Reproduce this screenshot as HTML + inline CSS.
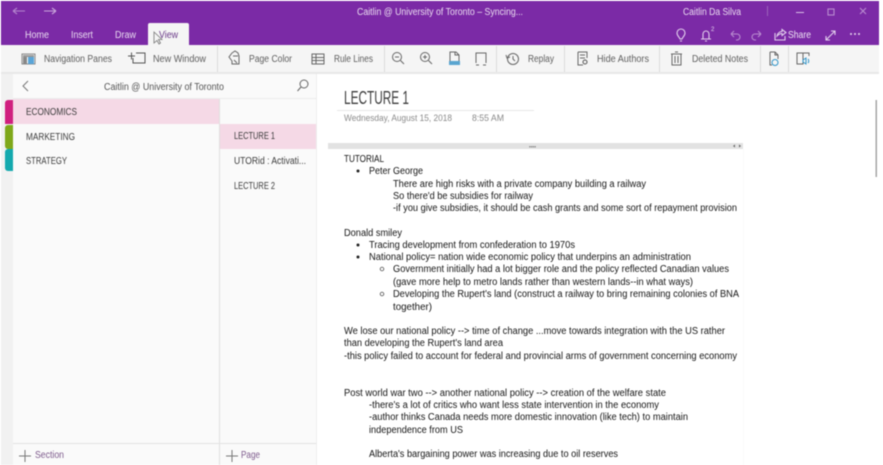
<!DOCTYPE html>
<html><head><meta charset="utf-8">
<style>
html,body{margin:0;padding:0;background:#fff;width:883px;height:465px;overflow:hidden}
svg{display:block;font-family:"Liberation Sans",sans-serif}
.b{filter:blur(.4px)}
.n{fill:#151515;font-size:10px}
.t{fill:#5e5e5e;font-size:10px}
.s{fill:#3c3c3c;font-size:10px}
.w{fill:#eadcf0;font-size:10px}
.i{fill:none;stroke:#666;stroke-width:1}
.iw{fill:none;stroke:#e2cfec;stroke-width:1.1}
</style></head><body>
<svg width="883" height="465" viewBox="0 0 883 465" xmlns="http://www.w3.org/2000/svg">
<g class="b">
<rect x="1" y="1" width="878" height="44" fill="#7b2aa6"/>
<rect x="1" y="45" width="878" height="28" fill="#f5f5f5"/>
<rect x="1" y="72" width="878" height="2" fill="#e8e8e8"/>
<!-- panes -->
<rect x="1" y="74" width="12" height="391" fill="#f1f1f1"/>
<rect x="13" y="74" width="206" height="391" fill="#fafafa"/>
<rect x="219" y="74" width="97" height="391" fill="#fafafa"/>
<rect x="219" y="98" width="1" height="367" fill="#e0e0e0"/>
<rect x="316" y="74" width="1" height="391" fill="#ededed"/>
<rect x="13" y="98" width="303" height="1" fill="#ececec"/>
<rect x="13" y="443" width="303" height="1" fill="#e2e2e2"/>
<rect x="13" y="99" width="206" height="25" fill="#f5d9e6"/>
<rect x="220" y="124" width="96" height="25" fill="#f5d9e6"/>
<path d="M5 103a3 3 0 0 1 3-3h5v24H5z" fill="#d01f7f"/>
<path d="M5 128a3 3 0 0 1 3-3h5v24H8a3 3 0 0 1-3-3z" fill="#7fa81a"/>
<path d="M5 152a3 3 0 0 1 3-3h5v22H8a3 3 0 0 1-3-3z" fill="#14a9ae"/>
<!-- title bar -->
<path d="M13 11h12M13 11l4-3M13 11l4 3" class="iw" opacity=".55"/>
<path d="M44 11h12M56 11l-4-3M56 11l-4 3" class="iw" opacity=".75"/>
<text x="357" y="15" class="w" textLength="166" lengthAdjust="spacingAndGlyphs">Caitlin @ University of Toronto – Syncing...</text>
<text x="683" y="15" class="w" textLength="58" lengthAdjust="spacingAndGlyphs">Caitlin Da Silva</text>
<rect x="767" y="6" width="1" height="10" fill="#9b62bb"/>
<rect x="796" y="12" width="8" height="1" fill="#d9bfe6"/>
<rect x="828" y="9" width="6" height="6" class="iw" opacity=".6"/>
<path d="M860 8l6 6M866 8l-6 6" class="iw" opacity=".6"/>
<!-- tabs -->
<path d="M148 45V25a2 2 0 0 1 2-2h37a2 2 0 0 1 2 2v20z" fill="#f5f5f5"/>
<text x="25" y="38" class="w" textLength="24" lengthAdjust="spacingAndGlyphs">Home</text>
<text x="71" y="38" class="w" textLength="22" lengthAdjust="spacingAndGlyphs">Insert</text>
<text x="115" y="38" class="w" textLength="21" lengthAdjust="spacingAndGlyphs">Draw</text>
<text x="159" y="38" fill="#6a3a88" font-size="10" textLength="19" lengthAdjust="spacingAndGlyphs">View</text>
<path d="M154 32v11l3-2.500 2 3.500 1.500-1-2-3.500h3.500z" fill="#f5f5f5" stroke="#777" stroke-width=".8"/>
<!-- right purple icons -->
<path d="M680 39c-.5-2-3-3-3-6a4 4 0 0 1 8 0c0 3-2.500 4-3 6zM680 41h2" class="iw"/>
<path d="M701 39h10M703 38.500v-4.500a3 3 0 0 1 6 0v4.500M705 41h2" class="iw"/>
<text x="711" y="31" fill="#e6d5ee" font-size="6">2</text>
<path d="M731 34l3-3M731 34l3 3M731 34h6a3 3 0 0 1 0 6h-1" class="iw" opacity=".6"/>
<path d="M761 34l-3-3M761 34l-3 3M761 34h-6a3 3 0 0 0 0 6h1" class="iw" opacity=".6"/>
<path d="M775 33v7h10v-4M777 36c.5-3 3-4.500 5-4.500v-2l4 3-4 3v-2c-2 0-3.500 1-5 2.500z" class="iw"/>
<text x="788" y="38" fill="#f0e6f5" font-size="10.500" textLength="23" lengthAdjust="spacingAndGlyphs">Share</text>
<path d="M826 40l9-9M826 36v4h4M835 35v-4h-4" class="iw"/>
<circle cx="851" cy="34" r="1" fill="#e6d5ee"/><circle cx="855" cy="34" r="1" fill="#e6d5ee"/><circle cx="859" cy="34" r="1" fill="#e6d5ee"/>
<!-- toolbar separators -->
<g fill="#dcdcdc"><rect x="217" y="46" width="1" height="26"/><rect x="384" y="46" width="1" height="26"/><rect x="496" y="46" width="1" height="26"/><rect x="564" y="46" width="1" height="26"/><rect x="659" y="46" width="1" height="26"/><rect x="760" y="46" width="1" height="26"/><rect x="788" y="46" width="1" height="26"/></g>
<!-- toolbar text -->
<text x="44" y="62" class="t" textLength="68" lengthAdjust="spacingAndGlyphs">Navigation Panes</text>
<text x="153" y="62" class="t" textLength="53" lengthAdjust="spacingAndGlyphs">New Window</text>
<text x="249" y="62" class="t" textLength="43" lengthAdjust="spacingAndGlyphs">Page Color</text>
<text x="334" y="62" class="t" textLength="39" lengthAdjust="spacingAndGlyphs">Rule Lines</text>
<text x="528" y="62" class="t" textLength="26" lengthAdjust="spacingAndGlyphs">Replay</text>
<text x="597" y="62" class="t" textLength="52" lengthAdjust="spacingAndGlyphs">Hide Authors</text>
<text x="692" y="62" class="t" textLength="56" lengthAdjust="spacingAndGlyphs">Deleted Notes</text>
<!-- toolbar icons -->
<rect x="22" y="54" width="13" height="10" fill="#fff" stroke="#888"/><rect x="23" y="55" width="11" height="2" fill="#999"/><rect x="23" y="57" width="4" height="7" fill="#888"/><rect x="28" y="57" width="6" height="7" fill="#5aa5d8"/>
<path d="M136 53h9v10h-12v-5M128 56h7M131.500 52.500v7" fill="none" stroke="#555"/>
<path d="M232 53l3-2 3 2 1 3v8h-7v-3l-3-4zM233 56h5M234 60l3 3" class="i"/>
<rect x="312" y="54" width="12" height="10" class="i"/><path d="M312 57.500h12M312 60.500h12M316 54v10" class="i"/>
<circle cx="397" cy="57" r="4.500" class="i"/><path d="M400.500 60.500l3.500 3.500M395 57h4" class="i"/>
<circle cx="425" cy="57" r="4.500" class="i"/><path d="M428.500 60.500l3.500 3.500M423 57h4M425 55v4" class="i"/>
<path d="M450 62v-10h6l3 3v7M455 52v3h4" class="i"/><rect x="449" y="61" width="11" height="4" fill="#5aa5d0"/>
<path d="M476 63v-10h10v10M476 65h3M483 65h3" class="i"/>
<circle cx="513" cy="59" r="5.500" class="i"/><path d="M513 56v3l2 2M506 55l1 3 3-1" class="i"/>
<path d="M578 52h9v6M578 52v13h5M580 55h5M580 58h5" class="i"/><circle cx="585" cy="62" r="2" stroke="#555" fill="none"/>
<path d="M672 54h9v11h-9zM671 54h11M675 52h3M675 56v7M678 56v7" class="i"/>
<path d="M770 52h5l3 3v4M775 52v3h3M770 52v13h2" class="i"/><circle cx="775" cy="62.500" r="3" stroke="#2f94c8" fill="none"/>
<path d="M797 53h6v11h-6zM803 53h6v3" class="i"/><path d="M803 60l3-2v6l-3-2zM808 59c1 1 1 3 0 4" stroke="#2f94c8" fill="none"/>
<!-- nav header -->
<path d="M28 81l-5 5 5 5" fill="none" stroke="#777" stroke-width="1"/>
<text x="104" y="90" fill="#555" font-size="10" textLength="120" lengthAdjust="spacingAndGlyphs">Caitlin @ University of Toronto</text>
<circle cx="304" cy="84" r="4" class="i"/><path d="M301 87l-3.500 4" class="i"/>
<!-- sections and pages -->
<text x="26" y="115" class="s" textLength="51" lengthAdjust="spacingAndGlyphs">ECONOMICS</text>
<text x="26" y="140" class="s" textLength="49" lengthAdjust="spacingAndGlyphs">MARKETING</text>
<text x="26" y="164" class="s" textLength="41" lengthAdjust="spacingAndGlyphs">STRATEGY</text>
<text x="234" y="139" class="s" textLength="41" lengthAdjust="spacingAndGlyphs">LECTURE 1</text>
<text x="234" y="164" class="s" textLength="72" lengthAdjust="spacingAndGlyphs">UTORid : Activati...</text>
<text x="234" y="189" class="s" textLength="41" lengthAdjust="spacingAndGlyphs">LECTURE 2</text>
<path d="M19 456h12M25 450v12M226 456h12M232 450v12" stroke="#777" fill="none"/>
<text x="35" y="458" fill="#7d5a8c" font-size="10" textLength="29" lengthAdjust="spacingAndGlyphs">Section</text>
<text x="241" y="458" fill="#7d5a8c" font-size="10" textLength="19" lengthAdjust="spacingAndGlyphs">Page</text>
<!-- note header -->
<text x="344" y="104" fill="#3c3c3c" font-size="18" textLength="65" lengthAdjust="spacingAndGlyphs">LECTURE 1</text>
<rect x="337" y="110" width="197" height="1" fill="#e8e8e8"/>
<text x="344" y="121" fill="#8a8a8a" font-size="9.500" textLength="108" lengthAdjust="spacingAndGlyphs">Wednesday, August 15, 2018</text>
<text x="472" y="121" fill="#8a8a8a" font-size="9.500" textLength="32" lengthAdjust="spacingAndGlyphs">8:55 AM</text>
<rect x="328" y="143" width="415" height="6" fill="#e2e2e2"/>
<text x="529" y="148.500" fill="#777" font-size="5">••••</text>
<path d="M735 144.500l-2 1.500 2 1.500zM739 144.500l2 1.500-2 1.500z" fill="#666"/>
<rect x="743" y="149" width="1" height="316" fill="#fafafa"/>
<rect x="875.500" y="100" width="1.500" height="77" fill="#a5a5a5"/>
<!-- body -->
<text x="344" y="162" class="n" textLength="40" lengthAdjust="spacingAndGlyphs">TUTORIAL</text>
<circle cx="358" cy="171" r="1.500" fill="#222"/>
<text x="369" y="174" class="n" textLength="54" lengthAdjust="spacingAndGlyphs">Peter George</text>
<text x="393" y="187" class="n" textLength="253" lengthAdjust="spacingAndGlyphs">There are high risks with a private company building a railway</text>
<text x="393" y="199" class="n" textLength="140" lengthAdjust="spacingAndGlyphs">So there'd be subsidies for railway</text>
<text x="393" y="211" class="n" textLength="344" lengthAdjust="spacingAndGlyphs">-if you give subsidies, it should be cash grants and some sort of repayment provision</text>
<text x="344" y="236" class="n" textLength="58" lengthAdjust="spacingAndGlyphs">Donald smiley</text>
<circle cx="358" cy="245" r="1.500" fill="#222"/>
<text x="369" y="248" class="n" textLength="206" lengthAdjust="spacingAndGlyphs">Tracing development from confederation to 1970s</text>
<circle cx="358" cy="257" r="1.500" fill="#222"/>
<text x="369" y="260" class="n" textLength="322" lengthAdjust="spacingAndGlyphs">National policy= nation wide economic policy that underpins an administration</text>
<circle cx="382" cy="269" r="1.800" fill="none" stroke="#333" stroke-width=".7"/>
<text x="393" y="272" class="n" textLength="336" lengthAdjust="spacingAndGlyphs">Government initially had a lot bigger role and the policy reflected Canadian values</text>
<text x="393" y="285" class="n" textLength="300" lengthAdjust="spacingAndGlyphs">(gave more help to metro lands rather than western lands--in what ways)</text>
<circle cx="382" cy="294" r="1.800" fill="none" stroke="#333" stroke-width=".7"/>
<text x="393" y="297" class="n" textLength="346" lengthAdjust="spacingAndGlyphs">Developing the Rupert's land (construct a railway to bring remaining colonies of BNA</text>
<text x="393" y="310" class="n" textLength="39" lengthAdjust="spacingAndGlyphs">together)</text>
<text x="344" y="334" class="n" textLength="381" lengthAdjust="spacingAndGlyphs">We lose our national policy --&gt; time of change ...move towards integration with the US rather</text>
<text x="344" y="346" class="n" textLength="159" lengthAdjust="spacingAndGlyphs">than developing the Rupert's land area</text>
<text x="344" y="359" class="n" textLength="393" lengthAdjust="spacingAndGlyphs">-this policy failed to account for federal and provincial arms of government concerning economy</text>
<text x="344" y="396" class="n" textLength="322" lengthAdjust="spacingAndGlyphs">Post world war two --&gt; another national policy --&gt; creation of the welfare state</text>
<text x="369" y="408" class="n" textLength="290" lengthAdjust="spacingAndGlyphs">-there's a lot of critics who want less state intervention in the economy</text>
<text x="369" y="420" class="n" textLength="319" lengthAdjust="spacingAndGlyphs">-author thinks Canada needs more domestic innovation (like tech) to maintain</text>
<text x="369" y="433" class="n" textLength="94" lengthAdjust="spacingAndGlyphs">independence from US</text>
<text x="369" y="457" class="n" textLength="249" lengthAdjust="spacingAndGlyphs">Alberta's bargaining power was increasing due to oil reserves</text>
</g>
</svg>
</body></html>
